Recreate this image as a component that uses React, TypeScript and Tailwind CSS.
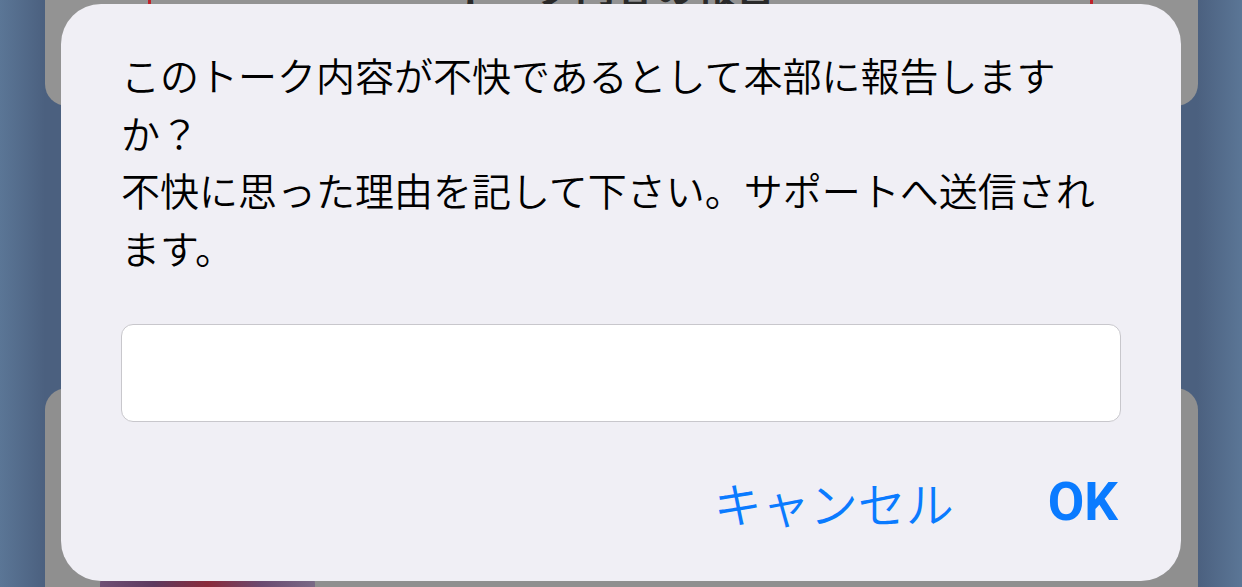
import React from "react";

const jp = { fontFamily: '"Noto Sans CJK JP", "Noto Sans", sans-serif' };

export default function App() {
  return (
    <div
      className="relative h-[587px] w-full overflow-hidden bg-[linear-gradient(to_right,#5b7696_0px,#4b607f_45px,#4b607f_1197px,#5b7696_1242px)]"
      style={jp}
    >
      {/* background screen */}
      <div className="flex h-full flex-col px-[45px] pr-[44px]">
        <div className="relative h-[106px] shrink-0 overflow-hidden rounded-b-[22px] bg-[#939393]">
          <div className="absolute left-[103px] top-[-60px] h-[100px] w-[945px] rounded-[14px] border-[3px] border-[#c0222a]" />
          <div className="absolute left-[410px] top-[-34px] text-[40px] font-bold leading-[40px] text-[#2a2a2a]">
            トーク内容の報告
          </div>
        </div>
        <div className="h-[282px] shrink-0" />
        <div className="relative flex-1 overflow-hidden rounded-t-[22px] bg-[#8f8f8f]">
          <div className="absolute bottom-[-20px] left-[55px] h-[30px] w-[215px] rounded-[6px] bg-[linear-gradient(to_right,#6e4f74,#5d3a5f,#8a2a3a,#6a4a70,#7a6a86)]" />
        </div>
      </div>

      {/* alert overlay */}
      <div className="absolute inset-0 flex items-start justify-center pt-[4px]">
        <div className="flex h-[577px] w-[1120px] flex-col rounded-[40px] bg-[#f0eff5] px-[60px] pt-[42px]">
          <p className="text-[39px] font-[350] leading-[57.5px] text-[#000000]">
            このトーク内容が不快であるとして本部に報告しますか？
            <br />
            不快に思った理由を記して下さい。サポートへ送信されます。
          </p>
          <div className="mt-[48px] h-[98px] w-full rounded-[12px] border border-[#c8c7cc] bg-white" />
          <div className="mt-[50px] flex h-[60px] items-center justify-end gap-[94px] pr-[3px]">
            <span className="text-[48px] font-[350] leading-[60px] text-[#0a7bff]">キャンセル</span>
            <span
              className="text-[53px] font-bold leading-[60px] text-[#0a7bff]"
              style={{ fontFamily: "Roboto, 'Liberation Sans', sans-serif" }}
            >
              OK
            </span>
          </div>
        </div>
      </div>
    </div>
  );
}
